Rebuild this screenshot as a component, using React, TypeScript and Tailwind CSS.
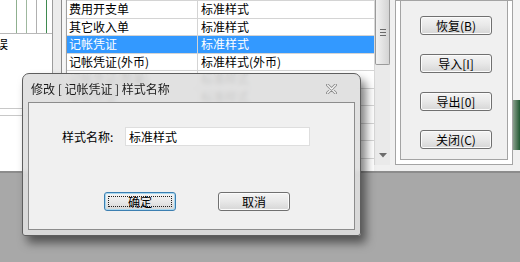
import React from 'react';

const rows = [
  { name: '凭证', style: '标准样式' },
  { name: '费用开支单', style: '标准样式' },
  { name: '其它收入单', style: '标准样式' },
  { name: '记帐凭证', style: '标准样式', selected: true },
  { name: '记帐凭证(外币)', style: '标准样式(外币)' },
  { name: '记帐凭证(数量)', style: '标准样式' },
  { name: '收款凭证', style: '标准样式' },
  { name: '付款凭证', style: '标准样式' },
  { name: '转帐凭证', style: '标准样式' },
  { name: '调拨单', style: '标准样式' },
  { name: '盘点单', style: '标准样式' },
];

function WinButton({ label, focused }: { label: string; focused?: boolean }) {
  return (
    <button
      className={
        'relative h-[19px] w-[72px] rounded-[3px] border text-[12px] leading-none text-black bg-gradient-to-b from-[#f4f4f4] via-[#e8e8e8] to-[#d6d6d6] ' +
        (focused ? 'border-[#3c7fb1] shadow-[inset_0_0_0_1px_#a8d8f0]' : 'border-[#707070] shadow-[inset_0_0_0_1px_#fbfbfb]')
      }
    >
      {focused && <span className="absolute inset-[3px] border border-dotted border-[#202020]" />}
      <span className="relative">{label}</span>
    </button>
  );
}

export default function App() {
  return (
    <div className="relative w-[520px] h-[262px] overflow-hidden bg-[#a8a8a8] font-['Noto_Sans_CJK_SC',sans-serif]">
      {/* main window behind */}
      <div className="flex h-[173px] bg-[#f0f0f0] border-b-[2px] border-[#8c8c8c]">
        {/* left panel */}
        <div className="flex w-[66px] shrink-0">
          <div className="flex w-[53px] flex-col bg-white border-r border-[#9c9c9c]">
            <div className="flex h-[34px] border-b border-[#b8b8b8]">
              <div className="w-[17px] border-r border-[#8fb08f]" />
              <div className="w-[10px] border-r border-[#9fb89f]" />
              <div className="w-[10px] border-r border-[#b0b0b0]" />
              <div className="w-[10px] border-r border-[#3f8a4f]" />
            </div>
            <div className="h-[20px] pt-[2px] text-[12px] leading-[16px] text-black -ml-[4px]">误</div>
            <div className="mt-[48px] h-[7px] border-b border-[#c8c8c8]" />
            <div className="h-[7px] border-b border-[#c8c8c8]" />
          </div>
          <div className="w-[9px] bg-[#ececec] border-r border-[#8a8a8a]" />
          <div className="w-[3px] bg-[#f6f6f6]" />
        </div>

        {/* table */}
        <div className="w-[308px] shrink-0 overflow-hidden bg-white border-l border-[#a0a0a0] text-[12px] text-black">
          <div className="-mt-[16.5px]">
            {rows.map((r, i) => (
              <div
                key={i}
                className={
                  'flex h-[17.5px] items-center border-b border-[#d4d4d4] ' +
                  (r.selected ? 'bg-[#3399ff] text-white' : '')
                }
              >
                <div className="w-[131px] h-full flex items-center pl-[2px] border-r border-[#d4d4d4]">{r.name}</div>
                <div className="flex-1 pl-[3px] whitespace-nowrap">{r.style}</div>
              </div>
            ))}
          </div>
        </div>

        {/* scrollbar */}
        <div className="relative w-[16px] shrink-0 bg-[#eaeaea] border-l border-[#d8d8d8] h-[165px]">
          <div className="absolute left-[0px] right-[0px] top-0 h-[65px] rounded-b-[2px] border border-t-0 border-[#9a9a9a] bg-gradient-to-r from-[#f2f2f2] to-[#d4d4d4] flex flex-col items-center justify-center gap-[2px]">
            <div className="h-px w-[6px] bg-[#6a6a6a]" />
            <div className="h-px w-[6px] bg-[#6a6a6a]" />
            <div className="h-px w-[6px] bg-[#6a6a6a]" />
          </div>
          <svg className="absolute left-[4px] top-[153px]" width="8" height="5" viewBox="0 0 8 5">
            <path d="M0 0 L8 0 L4 4.5 Z" fill="#6c6c6c" />
          </svg>
        </div>

        {/* right panel */}
        <div className="flex flex-1 pl-[5px] pb-[6px]">
          <div className="flex flex-1 border border-[#a4a4a4] bg-white p-[4px] pt-0">
            <div className="flex flex-1 flex-col gap-[19px] border-x border-b border-[#a4a4a4] bg-[#f0f0f0] pl-[19px] pt-[15px]">
              <WinButton label="恢复(B)" />
              <WinButton label="导入[I]" />
              <WinButton label="导出[0]" />
              <WinButton label="关闭(C)" />
            </div>
          </div>
          <div className="w-[7px] flex flex-col">
            <div className="h-[100px] bg-[#f4f4f4]" />
            <div className="h-[50px] bg-gradient-to-r from-[#8aa08e] to-[#1f5a34]" />
          </div>
        </div>
      </div>

      {/* dialog */}
      <div className="absolute left-[22px] top-[73px] flex h-[163px] w-[339px] flex-col rounded-t-[7px] rounded-b-[3px] border border-[#5e5e5e] bg-[#dedede]/90 px-[5px] pb-[5px] shadow-[5px_7px_10px_rgba(0,0,0,0.5)] backdrop-blur-[2px]">
        <div className="flex h-[28px] items-center justify-between pl-[3px] pr-[18px] pt-[1px]">
          <span className="text-[12px] text-[#1a1a1a]">修改 [ 记帐凭证 ] 样式名称</span>
          <svg width="11" height="10" viewBox="0 0 11 10">
            <path d="M1.5 1 L9.5 9 M9.5 1 L1.5 9" stroke="#8a8a8a" strokeWidth="3" strokeLinecap="round" />
            <path d="M1.5 1 L9.5 9 M9.5 1 L1.5 9" stroke="#f4f4f4" strokeWidth="1.4" strokeLinecap="round" />
          </svg>
        </div>
        <div className="flex flex-1 flex-col border border-[#8c8c8c] bg-[#f0f0f0] pl-[33px] pt-[24px]">
          <div className="flex items-center">
            <span className="w-[63px] text-[12px] text-black">样式名称:</span>
            <div className="flex h-[19px] w-[185px] items-center border border-[#dedede] bg-white pl-[3px] text-[12px] text-black">
              标准样式
            </div>
          </div>
          <div className="mt-[46px] ml-[42px] flex gap-[42px]">
            <WinButton label="确定" focused />
            <WinButton label="取消" />
          </div>
        </div>
      </div>
    </div>
  );
}
